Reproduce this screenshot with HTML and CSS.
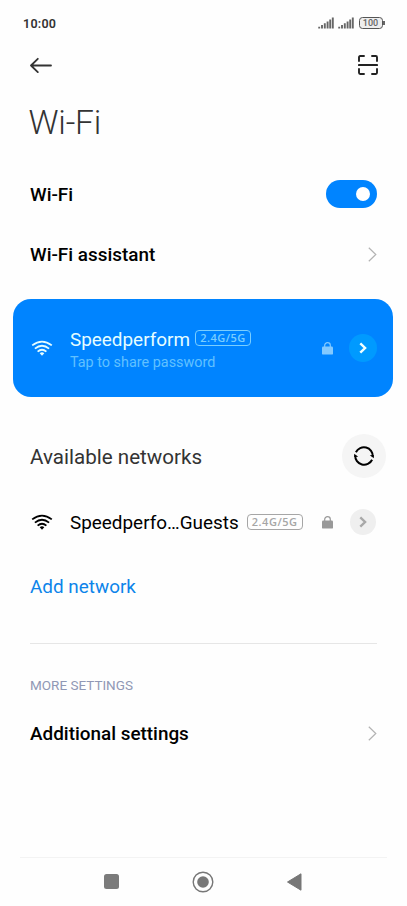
FILE: index.html
```html
<!DOCTYPE html>
<html lang="en">
<head>
<meta charset="utf-8">
<title>Wi-Fi</title>
<link rel="stylesheet" href="styles.css">
</head>
<body>
<svg width="0" height="0" class="defs">
  <symbol id="wifi" viewBox="0 0 22 16">
    <g fill="none" stroke="currentColor" stroke-width="1.8">
      <path d="M1.2 5.4Q11 -2.2 20.8 5.4"/>
      <path d="M3.9 8.6Q11 2.8 18.1 8.6"/>
      <path d="M6.6 11.6Q11 7.8 15.4 11.6"/>
    </g>
    <path fill="currentColor" d="M8.7 13.2Q11 11.4 13.3 13.2L11 15.7Z"/>
  </symbol>
  <symbol id="lock" viewBox="0 0 11 13">
    <path d="M2.7 6V3.3a2.8 2.6 0 0 1 5.6 0V6" fill="none" stroke="currentColor" stroke-width="1.2"/>
    <rect y="4.6" width="11" height="8" rx="1.2" fill="currentColor"/>
  </symbol>
  <symbol id="go" viewBox="0 0 8 12">
    <path d="M1.3 1.3L6.1 6L1.3 10.7" fill="none" stroke="currentColor" stroke-width="2.4"/>
  </symbol>
  <symbol id="chevron" viewBox="0 0 9 15">
    <path d="M.8 .8L7.8 7.5L.8 14.2" fill="none" stroke="currentColor" stroke-width="1.2"/>
  </symbol>
  <symbol id="signal" viewBox="0 0 16 12">
    <path d="M1.2 11.5V9.7M4 11.5V8.1M6.8 11.5V6.3M9.6 11.5V4.5M12.2 11.5V2.5M14.8 11.5V.5" fill="none" stroke="currentColor" stroke-width="1.9"/>
  </symbol>
</svg>
<div class="status">
  <span class="time">10:00</span>
  <svg class="signal"><use href="#signal"/></svg>
  <svg class="signal"><use href="#signal"/></svg>
  <span class="battery">100</span><i class="tip"></i>
</div>
<header class="bar">
  <svg width="22" height="16" viewBox="0 0 22 16" fill="none" stroke="#333" stroke-width="1.8" stroke-linecap="round" stroke-linejoin="round"><path d="M21 8.5H1M7.8 1.8L1 8.5L7.8 15.2"/></svg>
  <svg width="20" height="20" viewBox="0 0 20 20" fill="none" stroke="#222" stroke-width="1.9" stroke-linecap="round"><path d="M1 6V2.2Q1 1 2.2 1H6M14 1H17.8Q19 1 19 2.2V6M1 14V17.8Q1 19 2.2 19H6M14 19H17.8Q19 19 19 17.8V14M.9 10H19.1"/></svg>
</header>
<h1 class="title">Wi-Fi</h1>
<div class="row"><span class="label">Wi-Fi</span><span class="toggle"></span></div>
<div class="row"><span class="label">Wi-Fi assistant</span><svg class="chevron"><use href="#chevron"/></svg></div>
<section class="card">
  <svg class="wifi"><use href="#wifi"/></svg>
  <div class="info">
    <div class="name"><span class="ssid">Speedperform</span><span class="band">2.4G/5G</span></div>
    <div class="hint">Tap to share password</div>
  </div>
  <svg class="lock"><use href="#lock"/></svg>
  <span class="go"><svg><use href="#go"/></svg></span>
</section>
<div class="section-head">
  <h2>Available networks</h2>
  <span class="refresh"><svg width="22" height="22" viewBox="0 0 22 22" fill="none" stroke="#000" stroke-width="2"><path d="M2.9 7.3A8.9 8.9 0 0 1 19.8 11.6M19.1 14.7A8.9 8.9 0 0 1 2.2 10.4"/><path d="M16.8 10.3L20.8 10V13.2zM5.2 11.7L1.2 12V8.8z" fill="#000" stroke="none"/></svg></span>
</div>
<div class="network">
  <svg class="wifi"><use href="#wifi"/></svg>
  <div class="info name"><span class="guest">Speedperfo…Guests</span><span class="band">2.4G/5G</span></div>
  <svg class="lock"><use href="#lock"/></svg>
  <span class="go"><svg><use href="#go"/></svg></span>
</div>
<div class="add">Add network</div>
<div class="more">MORE SETTINGS</div>
<div class="row"><span class="label">Additional settings</span><svg class="chevron"><use href="#chevron"/></svg></div>
<nav class="nav">
  <svg width="15" height="15"><rect width="15" height="15" rx="2.5" fill="#7b7b7b"/></svg>
  <svg width="22" height="22"><circle cx="11" cy="11" r="9.8" fill="none" stroke="#777" stroke-width="1.4"/><circle cx="11" cy="11" r="5.8" fill="#777"/></svg>
  <svg width="15" height="18"><path d="M.5 9L14 .8V17.2Z" fill="#777" stroke="#777" stroke-linejoin="round"/></svg>
</nav>
</body>
</html>
```
FILE: styles.css
```css
* { box-sizing: border-box; }
body {
  margin: 0;
  width: 407px;
  height: 906px;
  display: flex;
  flex-direction: column;
  background: #fefefe;
  color: #000;
  font-family: Roboto, "Liberation Sans", sans-serif;
}
svg { display: block; flex: none; }
.defs { position: absolute; }
.status {
  height: 46px;
  padding: 0 22px 0 23px;
  display: flex;
  align-items: center;
  color: #666;
}
.time { flex: 1; font-size: 12.5px; font-weight: 600; letter-spacing: .25px; color: #333; }
.signal { width: 16px; height: 12px; margin-right: 4.5px; }
.battery {
  width: 24px;
  height: 12px;
  border: 1.5px solid #555;
  border-radius: 3.5px;
  background: #eee;
  font-size: 9px;
  font-weight: 500;
  line-height: 10.5px;
  text-align: center;
}
.tip { width: 2px; height: 4px; background: #666; margin-left: .5px; }
.bar {
  height: 38px;
  padding: 0 29px 0 30px;
  display: flex;
  align-items: center;
  justify-content: space-between;
}
.title {
  margin: 0;
  height: 80px;
  padding-left: 28.5px;
  line-height: 78px;
  font-size: 33.5px;
  font-weight: 300;
  letter-spacing: -.2px;
  color: #333;
}
.row {
  height: 60px;
  padding: 0 30px;
  display: flex;
  align-items: center;
  justify-content: space-between;
}
.label { padding-top: 1px; font-size: 18.9px; font-weight: 500; }
.toggle {
  width: 51px;
  height: 28px;
  border-radius: 14px;
  background: #0084ff;
  padding: 7px;
  display: flex;
  justify-content: flex-end;
}
.toggle::after { content: ""; width: 14px; height: 14px; border-radius: 50%; background: #fff; }
.chevron { width: 9px; height: 15px; color: #b3b3b3; }
.card {
  height: 98px;
  margin: 15px 14px 0 13px;
  padding: 0 16px 0 18px;
  border-radius: 18px;
  background: #0084ff;
  color: #e5fdff;
  display: flex;
  align-items: center;
}
.wifi { width: 22px; height: 16px; margin-right: 17px; }
.info { flex: 1; }
.name { display: flex; align-items: center; white-space: nowrap; }
.ssid, .guest { font-size: 18.9px; line-height: 23px; }
.card .info { padding-top: 5px; }
.band {
  width: 56px;
  height: 16px;
  margin-left: 5px;
  border: 1.5px solid currentColor;
  border-radius: 4px;
  font: 600 11px/14px "Open Sans", sans-serif;
  text-align: center;
  letter-spacing: .5px;
}
.card .band { color: #79ceff; margin-top: -2px; }
.hint { font-size: 14.4px; line-height: 23px; color: #61c1ff; }
.lock { width: 11px; height: 13px; margin-right: 17px; }
.card .lock { color: #83c9ff; margin-right: 16px; }
.go {
  width: 26px;
  height: 26px;
  border-radius: 50%;
  background: #efefef;
  color: #a8a8a8;
  display: grid;
  place-items: center;
}
.go svg { width: 8px; height: 12px; }
.card .go { width: 28px; height: 28px; background: #009aff; color: #f0ffff; }
.section-head {
  height: 44px;
  margin: 37px 21px 0 30px;
  display: flex;
  align-items: center;
  justify-content: space-between;
}
h2 { margin: 0; padding-top: 2px; font-size: 20.6px; font-weight: 400; color: #333; }
.refresh { width: 44px; height: 44px; border-radius: 50%; background: #f5f5f5; display: grid; place-items: center; }
.network { height: 60px; margin-top: 14px; padding: 0 31px; display: flex; align-items: center; }
.network .band { margin-left: 8px; color: #a6a6a6; }
.network .lock { color: #999; }
.add { height: 70px; line-height: 70px; padding-left: 30px; font-size: 18.9px; color: #0d84ea; }
.more {
  height: 60px;
  margin: 21px 30px 0;
  border-top: 1px solid #e6e6e6;
  line-height: 83px;
  font-size: 13.5px;
  color: #9098b5;
}
.nav {
  height: 49px;
  margin: auto 20px 0;
  border-top: 1px solid #f3f3f3;
  padding: 0 85px 1px 84px;
  display: flex;
  align-items: center;
  justify-content: space-between;
}
```
